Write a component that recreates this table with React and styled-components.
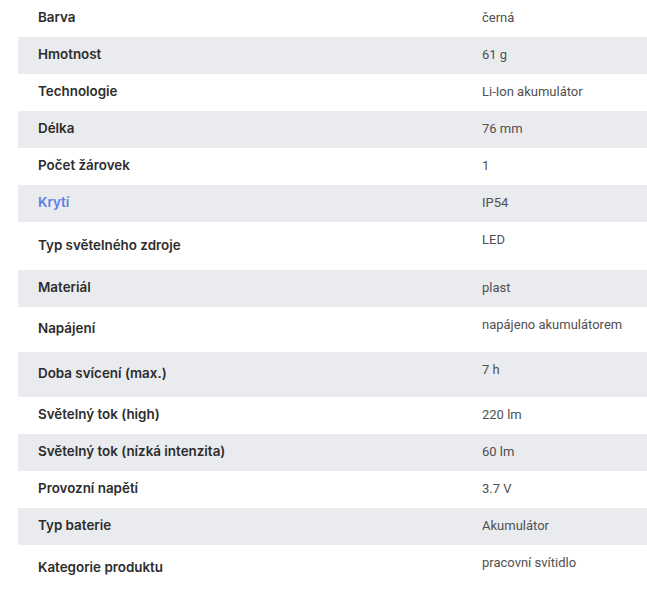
import React from 'react';
import styled, { createGlobalStyle } from 'styled-components';

const GlobalStyle = createGlobalStyle`
  body {
    margin: 0;
    background: #ffffff;
  }
`;

const Wrapper = styled.div`
  padding-left: 18px;
  overflow: hidden;
`;

const SpecTable = styled.table`
  width: 640px;
  border-collapse: collapse;
  border-spacing: 0;
`;

const Row = styled.tr`
  background-color: ${(p) => (p.$striped ? '#e9ebee' : '#ffffff')};
`;

const Label = styled.td`
  width: 404px;
  padding: 8px 20px 10px;
  vertical-align: middle;
  font-family: Inter, "Noto Sans", sans-serif;
  font-weight: 600;
  font-size: 13.4px;
  line-height: 19px;
  color: ${(p) => (p.$link ? '#5a7fe4' : '#2d2d2d')};
`;

const Value = styled.td`
  padding: 8px 20px 10px;
  vertical-align: top;
  font-family: Roboto, "Liberation Sans", sans-serif;
  font-weight: 400;
  font-size: 13px;
  line-height: 19px;
  color: #505050;
`;

const ValueText = styled.div`
  padding-bottom: ${(p) => p.$extra || 0}px;
`;

const specs = [
  { label: 'Barva', value: 'černá' },
  { label: 'Hmotnost', value: '61 g' },
  { label: 'Technologie', value: 'Li-Ion akumulátor' },
  { label: 'Délka', value: '76 mm' },
  { label: 'Počet žárovek', value: '1' },
  { label: 'Krytí', value: 'IP54', link: true },
  { label: 'Typ světelného zdroje', value: 'LED', extra: 11 },
  { label: 'Materiál', value: 'plast' },
  { label: 'Napájení', value: 'napájeno akumulátorem', extra: 8 },
  { label: 'Doba svícení (max.)', value: '7 h', extra: 8 },
  { label: 'Světelný tok (high)', value: '220 lm' },
  { label: 'Světelný tok (nízká intenzita)', value: '60 lm' },
  { label: 'Provozní napětí', value: '3.7 V' },
  { label: 'Typ baterie', value: 'Akumulátor' },
  { label: 'Kategorie produktu', value: 'pracovní svítidlo', extra: 10 },
];

export default function App() {
  return (
    <>
      <GlobalStyle />
      <Wrapper>
        <SpecTable>
          <tbody>
            {specs.map((s, i) => (
              <Row key={s.label} $striped={i % 2 === 1}>
                <Label $link={s.link}>{s.label}</Label>
                <Value>
                  <ValueText $extra={s.extra}>{s.value}</ValueText>
                </Value>
              </Row>
            ))}
          </tbody>
        </SpecTable>
      </Wrapper>
    </>
  );
}
